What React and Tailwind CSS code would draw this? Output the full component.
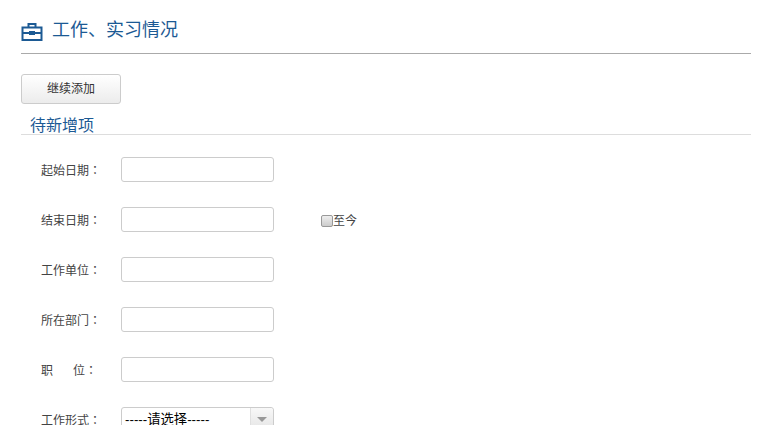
import React from 'react';

const Briefcase = () => (
  <svg width="22" height="18" viewBox="0 0 22 18" fill="none" className="text-[#1c5a94]">
    <path d="M7.5 4V1h7V4" stroke="currentColor" strokeWidth="2" />
    <rect x="1.5" y="4.5" width="19" height="12.5" stroke="currentColor" strokeWidth="2" />
    <path d="M1 10h20" stroke="currentColor" strokeWidth="2" />
    <rect x="8" y="8" width="6" height="4" fill="currentColor" />
  </svg>
);

const Field = ({ label, children, extra }) => (
  <div className="flex items-center h-[25px] mb-[25px]">
    <label className="w-[100px] pl-[20px] pt-[2px] text-[12px] text-[#444] whitespace-pre">
      {label}
      <span className="font-['Noto_Sans_CJK_TC',sans-serif]">：</span>
    </label>
    {children}
    {extra}
  </div>
);

const TextInput = () => (
  <input type="text" className="w-[153px] h-[25px] bg-white border border-[#ccc] rounded-[3px] outline-none" />
);

export default function App() {
  return (
    <div className="w-[777px] h-[425px] overflow-hidden bg-white pl-[21px] pr-[26px] font-['Liberation_Sans','Noto_Sans_CJK_SC',sans-serif]">
      <div className="h-[54px] border-b border-[#aaa] flex items-center gap-[10px] pt-[10px]">
        <Briefcase />
        <h2 className="text-[18px] font-normal text-[#1c5a94] -ml-[1px] -mt-[2px]">工作、实习情况</h2>
      </div>

      <button className="mt-[20px] block w-[100px] h-[30px] rounded-[3px] border border-[#ccc] bg-gradient-to-b from-white to-[#ececec] text-[12px] text-[#333]">
        继续添加
      </button>

      <div className="h-[31px] border-b border-[#ddd] pl-[9px] pt-[2px] text-[16px] leading-[40px] text-[#1c5a94] mb-[22px]">
        <span className="block h-[28px] leading-[40px]">待新增项</span>
      </div>

      <Field label="起始日期">
        <TextInput />
      </Field>
      <Field
        label="结束日期"
        extra={
          <span className="flex items-center ml-[47px] pt-[2px] text-[12px] text-[#444]">
            <span className="w-[12px] h-[12px] rounded-[2px] border border-[#999] bg-gradient-to-b from-[#eee] to-[#ccc]" />
            至今
          </span>
        }
      >
        <TextInput />
      </Field>
      <Field label="工作单位">
        <TextInput />
      </Field>
      <Field label="所在部门">
        <TextInput />
      </Field>
      <Field label="职      位">
        <TextInput />
      </Field>
      <Field label="工作形式">
        <div className="w-[153px] h-[25px] border border-[#ccc] rounded-[3px] flex items-center justify-between bg-white">
          <span className="pl-[3px] text-[13.33px] text-black">-----请选择-----</span>
          <span className="w-[23px] h-full flex items-center justify-center bg-gradient-to-b from-[#f8f8f8] to-[#e4e4e4] border-l border-[#e0e0e0] rounded-r-[3px]">
            <span className="w-0 h-0 border-l-[5px] border-r-[5px] border-t-[5px] border-l-transparent border-r-transparent border-t-[#999]" />
          </span>
        </div>
      </Field>
    </div>
  );
}
